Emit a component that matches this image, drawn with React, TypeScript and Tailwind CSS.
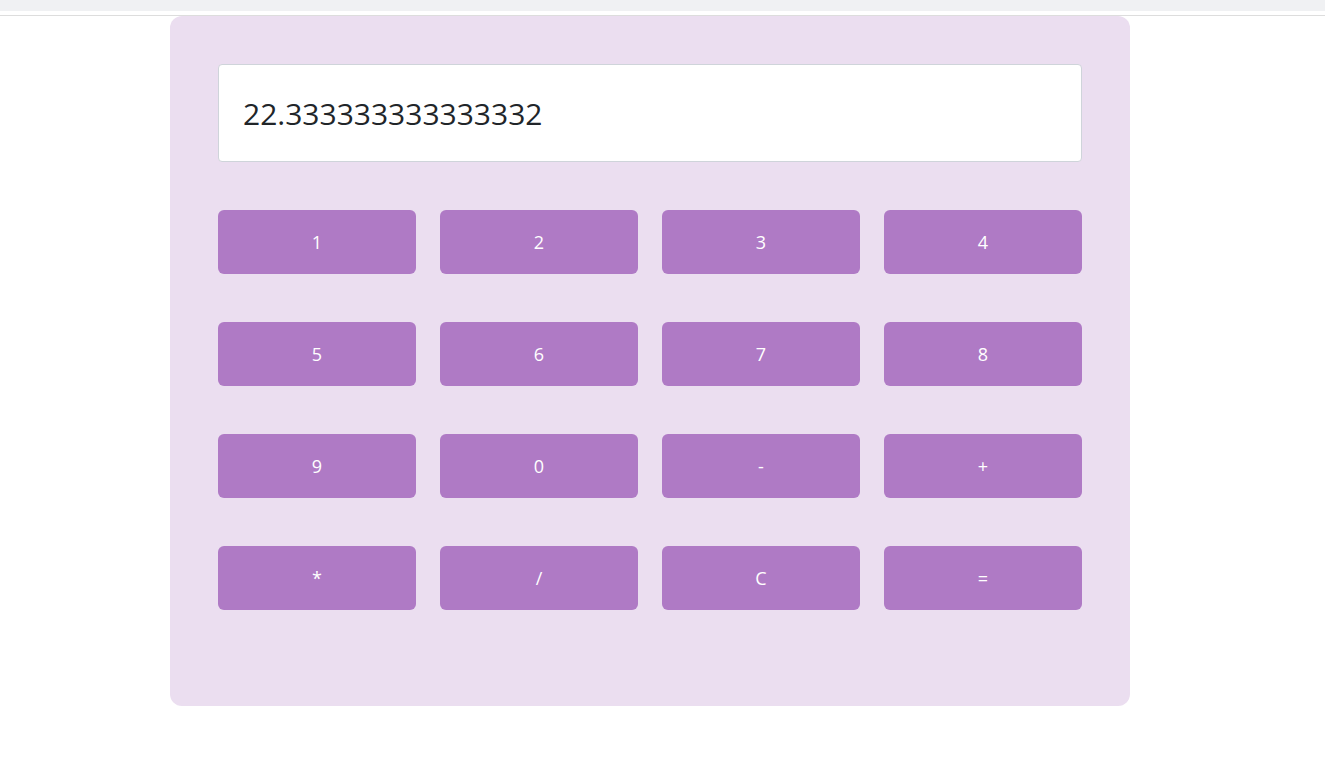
import React, { useState } from 'react';

const keys = ['1', '2', '3', '4', '5', '6', '7', '8', '9', '0', '-', '+', '*', '/', 'C', '='];

const App: React.FC = () => {
    const [display] = useState('22.333333333333332');

    const rows = [keys.slice(0, 4), keys.slice(4, 8), keys.slice(8, 12), keys.slice(12, 16)];

    return (
        <div className="min-h-[779px] bg-white" style={{ fontFamily: '"Open Sans", "Noto Sans", sans-serif' }}>
            <div className="h-[11px] bg-[#f0f1f3]" />
            <div className="mt-[4px] border-t border-[#dddddd]" />
            <div className="pl-[170px]">
                <div className="w-[960px] rounded-[12px] bg-[#ebdef0] p-[48px]">
                    <div className="mb-[48px] flex h-[98px] items-center rounded-[4px] border border-[#cfd4da] bg-white px-[24px] text-[30px] text-[#212529]">
                        {display}
                    </div>
                    {rows.map((row, i) => (
                        <div key={i} className="mb-[48px] grid grid-cols-4 gap-[24px]">
                            {row.map(k => (
                                <button
                                    key={k}
                                    className="flex h-[64px] items-center justify-center rounded-[6px] bg-[#af7ac5] text-[18px] text-white"
                                >
                                    {k}
                                </button>
                            ))}
                        </div>
                    ))}
                </div>
            </div>
        </div>
    );
};

export default App;
